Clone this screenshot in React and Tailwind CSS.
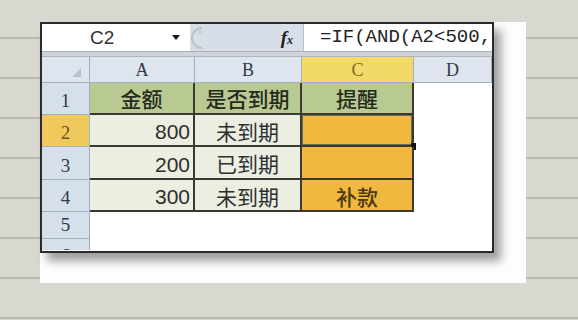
import React from "react";

const cjk = { fontFamily: '"Noto Sans CJK SC", "Noto Sans", sans-serif' };
const sans = { fontFamily: '"Liberation Sans", Arial, sans-serif' };
const serif = { fontFamily: '"Liberation Serif", "Times New Roman", serif' };
const mono = { fontFamily: '"Liberation Mono", "Courier New", monospace' };

function RowHead({ n, cls = "bg-[#d6e0ec] text-[#333a46]" }) {
  return (
    <div
      className={`flex items-end justify-center pb-[1px] border-r border-b border-[#a3afbd] text-[19px] leading-none ${cls}`}
      style={serif}
    >
      <span className="pb-[3px]">{n}</span>
    </div>
  );
}

function ColHead({ l, cls = "bg-[#dfe5ee] text-[#333a46]" }) {
  return (
    <div
      className={`flex items-end justify-center border-r border-b border-[#a3afbd] text-[18px] leading-none ${cls}`}
      style={serif}
    >
      <span className="pb-[3px]">{l}</span>
    </div>
  );
}

function Green({ children }) {
  return (
    <div
      className="flex items-center justify-center bg-[#b8ca92] border-r-2 border-b-2 border-[#3a3a30] text-[21px] font-medium text-[#262a1c] leading-none"
      style={cjk}
    >
      <span className="pt-[1px]">{children}</span>
    </div>
  );
}

function Num({ children }) {
  return (
    <div
      className="flex items-end justify-end pr-[3px] pb-[3px] bg-[#eceee2] border-r-2 border-b-2 border-[#3a3a30] text-[21px] text-[#2e2e2e] leading-none"
      style={sans}
    >
      {children}
    </div>
  );
}

function Txt({ children }) {
  return (
    <div
      className="flex items-center justify-center bg-[#eceee2] border-r-2 border-b-2 border-[#3a3a30] text-[21px] text-[#2e2e2e] leading-none"
      style={cjk}
    >
      <span className="pt-[2px]">{children}</span>
    </div>
  );
}

function Orange({ children, selected }) {
  return (
    <div
      className="relative flex items-center justify-center bg-[#f0b83e] border-r-2 border-b-2 border-[#3a3a30] text-[21px] font-medium text-[#4a3810] leading-none"
      style={cjk}
    >
      {selected && (
        <>
          <div className="absolute inset-[0px] border border-[#6c6c62]" />
          <div className="absolute right-[-4px] bottom-[-5px] w-[5px] h-[7px] bg-[#111]" />
        </>
      )}
      <span className="pt-[2px]">{children}</span>
    </div>
  );
}

function White() {
  return <div className="bg-white" />;
}

export default function App() {
  return (
    <div className="w-[578px] h-[320px] overflow-hidden bg-[#d8d8d0] bg-[image:repeating-linear-gradient(180deg,transparent_0px,transparent_37px,#babab2_37px,#babab2_39px,transparent_39px,transparent_40px)] pt-[22px] pl-[40px]">
      <div className="w-[486px] h-[261px] bg-[#fdfdfd]">
        <div className="w-[454px] h-[231px] border-2 border-[#2b2b2b] flex flex-col bg-white shadow-[7px_8px_9px_rgba(0,0,0,0.38)]">
          {/* formula bar */}
          <div className="h-[28px] flex border-b border-[#a9b0b8]">
            <div className="w-[148px] flex items-center bg-white">
              <span className="pl-[48px] text-[19px] text-[#333] leading-none" style={sans}>
                C2
              </span>
              <svg className="ml-auto mr-[10px]" width="8" height="6" viewBox="0 0 8 6">
                <path d="M0 0 H8 L4 5 Z" fill="#111" />
              </svg>
            </div>
            <div className="w-[113px] flex items-center bg-[#d7dee8] relative">
              <svg className="absolute left-[1px] top-[3px]" width="14" height="22" viewBox="0 0 14 22">
                <path d="M11 1 A10 10 0 0 0 11 21" fill="none" stroke="#bcc3cb" strokeWidth="2" />
                <circle cx="9" cy="5" r="1.6" fill="#c4cad2" />
              </svg>
              <span className="ml-auto mr-[10px] text-[19px] text-[#1e1e1e] italic font-bold leading-none" style={serif}>
                f<span className="text-[12px]">x</span>
              </span>
            </div>
            <div className="flex-1 flex items-center bg-white border-l border-[#b7bec6] overflow-hidden">
              <span className="pl-[16px] text-[19px] text-[#222] whitespace-nowrap leading-none" style={mono}>
                =IF(AND(A2&lt;500,
              </span>
            </div>
          </div>
          <div className="h-[5px] bg-[#cfd4da] border-b border-[#aeb5bd]" />
          {/* grid */}
          <div className="grid grid-cols-[48px_105px_107px_112px_78px] grid-rows-[26px_32px_32px_33px_32px_27px_11px] overflow-hidden">
            <div className="relative bg-[#dfe5ee] border-r border-b border-[#a3afbd]">
              <svg className="absolute right-[8px] bottom-[5px]" width="9" height="9" viewBox="0 0 9 9">
                <path d="M9 0 V9 H0 Z" fill="#b9c2cd" />
              </svg>
            </div>
            <ColHead l="A" />
            <ColHead l="B" />
            <ColHead l="C" cls="bg-[#f3da68] text-[#7a6a28]" />
            <ColHead l="D" />

            <RowHead n="1" />
            <Green>金额</Green>
            <Green>是否到期</Green>
            <Green>提醒</Green>
            <White />

            <RowHead n="2" cls="bg-[#f0c95c] text-[#6a5522]" />
            <Num>800</Num>
            <Txt>未到期</Txt>
            <Orange selected />
            <White />

            <RowHead n="3" />
            <Num>200</Num>
            <Txt>已到期</Txt>
            <Orange />
            <White />

            <RowHead n="4" />
            <Num>300</Num>
            <Txt>未到期</Txt>
            <Orange>补款</Orange>
            <White />

            <RowHead n="5" />
            <White />
            <White />
            <White />
            <White />

            <div className="bg-[#d6e0ec] border-r border-[#a3afbd] overflow-hidden flex justify-center">
              <span className="text-[19px] leading-none mt-[7px] text-[#333a46]" style={serif}>6</span>
            </div>
            <White />
            <White />
            <White />
            <White />
          </div>
        </div>
      </div>
    </div>
  );
}
